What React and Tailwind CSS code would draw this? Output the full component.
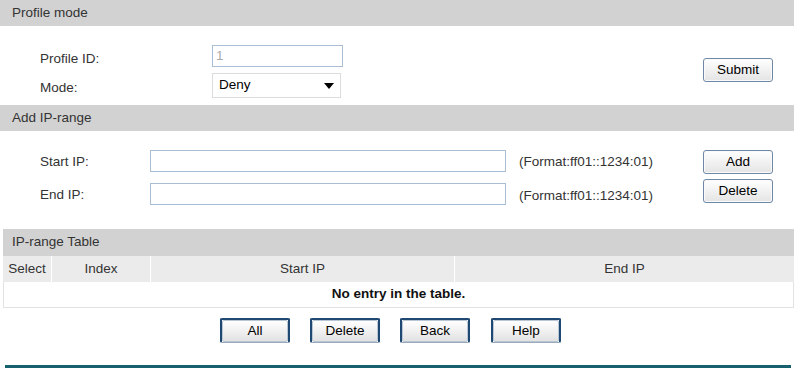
import React from 'react';

function Btn({ children }) {
  return (
    <button
      type="button"
      className="h-[24px] w-[70px] rounded-[3px] border border-[#7088a8] bg-gradient-to-b from-white to-[#e4e4e4] text-[13.5px] leading-none text-black shadow-[inset_0_0_0_1px_#fafafa]"
    >
      {children}
    </button>
  );
}

function FramedBtn({ children }) {
  return (
    <span className="inline-flex h-[25px] w-[70px] rounded-[2px] border-x-2 border-t-2 border-b border-x-[#1f4873] border-t-[#1f4873] border-b-[#9aa9bb]">
      <button
        type="button"
        className="h-full w-full rounded-[2px] border border-[#b8c6d6] bg-gradient-to-b from-white to-[#e2e2e2] text-[13.5px] leading-none text-black"
      >
        {children}
      </button>
    </span>
  );
}

function Bar({ title, tall }) {
  return (
    <div className={`flex items-center bg-[#d2d2d2] text-[13.5px] text-[#333] ${tall ? 'h-[27px] pl-[9px]' : 'h-[26px] pl-[12px]'}`}>
      {title}
    </div>
  );
}

export default function App() {
  return (
    <div className="w-[794px] h-[377px] bg-white font-['Liberation_Sans',Arial,sans-serif] text-[13.5px] text-[#333]">
      {/* Profile mode */}
      <Bar title="Profile mode" />
      <div className="flex h-[79px] items-start pt-[18px]">
        <div className="flex flex-col gap-[6px]">
          <div className="flex h-[23px] items-center">
            <span className="w-[212px] pl-[40px] pt-[7px]">Profile ID:</span>
            <input
              readOnly
              value="1"
              className="h-[22px] w-[131px] border border-[#a9bdd3] px-[3px] text-[13.5px] text-[#aaa] outline-none"
            />
          </div>
          <div className="flex h-[25px] items-center">
            <span className="w-[212px] pl-[40px] pt-[5px]">Mode:</span>
            <div className="flex h-[25px] w-[129px] items-center justify-between border border-[#dcdcdc] pl-[6px] pr-[6px] text-[13.5px] text-black">
              <span>Deny</span>
              <svg width="10" height="6" viewBox="0 0 10 6"><path d="M0 0h10L5 6z" fill="#000" /></svg>
            </div>
          </div>
        </div>
        <div className="ml-auto mr-[21px] mt-[14px]">
          <Btn>Submit</Btn>
        </div>
      </div>

      {/* Add IP-range */}
      <Bar title="Add IP-range" />
      <div className="flex h-[98px] items-start pt-[19px]">
        <div className="flex flex-col gap-[11px]">
          <div className="flex h-[22px] items-center">
            <span className="w-[150px] pl-[40px] pt-[3px]">Start IP:</span>
            <input className="h-[22px] w-[356px] border border-[#a9bdd3] outline-none" />
            <span className="ml-[13px] pt-[3px]">(Format:ff01::1234:01)</span>
          </div>
          <div className="flex h-[22px] items-center">
            <span className="w-[150px] pl-[40px] pt-[3px]">End IP:</span>
            <input className="h-[22px] w-[356px] border border-[#a9bdd3] outline-none" />
            <span className="ml-[13px] pt-[4px]">(Format:ff01::1234:01)</span>
          </div>
        </div>
        <div className="ml-auto mr-[21px] flex flex-col gap-[5px]">
          <Btn>Add</Btn>
          <Btn>Delete</Btn>
        </div>
      </div>

      {/* IP-range Table */}
      <div className="ml-[3px]">
        <Bar title="IP-range Table" tall />
        <div className="flex h-[26px] bg-[#ebebeb] text-[#333]">
          <div className="flex w-[49px] items-center justify-center border-r border-white">Select</div>
          <div className="flex w-[99px] items-center justify-center border-r border-white">Index</div>
          <div className="flex w-[304px] items-center justify-center border-r border-white">Start IP</div>
          <div className="flex flex-1 items-center justify-center">End IP</div>
        </div>
        <div className="flex h-[26px] items-center justify-center border-x border-b border-[#e2e2e2] font-bold text-[#111]">
          No entry in the table.
        </div>
      </div>

      <div className="mt-[10px] flex gap-[20px] pl-[220px]">
        <FramedBtn>All</FramedBtn>
        <FramedBtn>Delete</FramedBtn>
        <FramedBtn>Back</FramedBtn>
        <span className="ml-[1px]"><FramedBtn>Help</FramedBtn></span>
      </div>

      <div className="ml-[5px] mr-[3px] mt-[22px] h-[3px] bg-[#17606e]" />
    </div>
  );
}
